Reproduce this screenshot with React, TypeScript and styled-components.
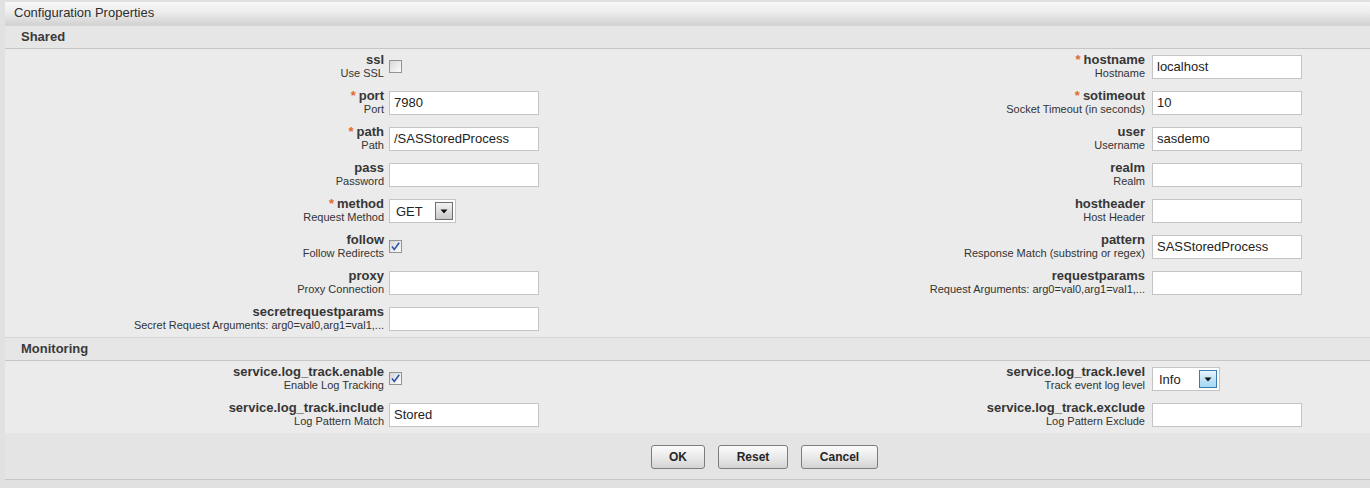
import React from "react";
import styled, { createGlobalStyle } from "styled-components";

const Global = createGlobalStyle`
  html, body { margin: 0; padding: 0; }
  body {
    background: #e1e1e1;
    font-family: "Liberation Sans", Arial, sans-serif;
    color: #333;
    width: 1370px;
    overflow: hidden;
  }
`;

const Panel = styled.div`
  margin: 2px 0 0 5px;
  width: 1365px;
  background: #ebebeb;
  border-bottom: 1px solid #c6c6c6;
`;

const Header = styled.div`
  height: 23px;
  line-height: 22px;
  padding-left: 9px;
  font-size: 13px;
  color: #2e2e2e;
  background: linear-gradient(to bottom, #f8f8f8 0%, #ececec 45%, #d2d2d2 100%);
`;

const SectionBar = styled.div`
  height: 22px;
  line-height: 22px;
  padding-left: 16px;
  font-size: 13px;
  font-weight: bold;
  color: #3a3a3a;
  background: #e6e6e6;
  border-top: 1px solid #d6d6d6;
  border-bottom: 1px solid #c6c6c6;
`;

const Grid = styled.div`
  display: grid;
  grid-template-columns: 384px 300px 463px 1fr;
  grid-auto-rows: 36px;
`;

const LabelCell = styled.div<{ $pad: number }>`
  display: flex;
  flex-direction: column;
  align-items: flex-end;
  padding: 4px ${(p) => p.$pad}px 0 0;
  white-space: nowrap;
`;

const Name = styled.div`
  font-size: 13px;
  font-weight: bold;
  line-height: 14px;
  color: #363636;
`;

const Star = styled.span`
  color: #e2692e;
  font-weight: bold;
  margin-right: 3px;
`;

const Sub = styled.div`
  font-size: 11px;
  line-height: 13px;
  color: #333;
`;

const FieldCell = styled.div`
  padding-top: 6px;
`;

const TextInput = styled.input`
  display: block;
  box-sizing: border-box;
  width: 150px;
  height: 24px;
  margin: 0;
  padding: 0 4px 1px 4px;
  border: 1px solid #c4c4c4;
  background: #fff;
  font-family: "Liberation Sans", Arial, sans-serif;
  font-size: 13px;
  color: #222;
  outline: none;
`;

const Check = styled.div`
  box-sizing: border-box;
  width: 13px;
  height: 13px;
  margin-top: 5px;
  border: 1px solid #939393;
  background: linear-gradient(135deg, #d6d6d6 0%, #eeeeee 60%, #fbfbfb 100%);
  display: flex;
  align-items: center;
  justify-content: center;
`;

const SelectBox = styled.div<{ $w: number }>`
  box-sizing: border-box;
  width: ${(p) => p.$w}px;
  height: 24px;
  border: 1px solid #c4c4c4;
  background: #fff;
  display: flex;
  align-items: center;
  justify-content: space-between;
  padding: 0 2px 0 6px;
  font-size: 13px;
  color: #222;
`;

const ArrowBtn = styled.div<{ $focus?: boolean }>`
  box-sizing: border-box;
  width: 18px;
  height: 18px;
  border: 1px solid ${(p) => (p.$focus ? "#3d7bad" : "#6f6f6f")};
  background: ${(p) =>
    p.$focus
      ? "linear-gradient(to bottom, #eaf6fd 0%, #bfe3f8 50%, #a7d9f5 100%)"
      : "linear-gradient(to bottom, #f2f2f2 0%, #dedede 50%, #c9c9c9 100%)"};
  display: flex;
  align-items: center;
  justify-content: center;
`;

const ButtonBar = styled.div`
  background: #e4e4e4;
  padding: 12px 0 10px 646px;
  display: flex;
  gap: 13px;
`;

const Btn = styled.button<{ $w: number }>`
  box-sizing: border-box;
  width: ${(p) => p.$w}px;
  height: 24px;
  margin: 0;
  padding: 0;
  border: 1px solid #7c7c7c;
  border-radius: 3px;
  background: linear-gradient(to bottom, #fbfbfb 0%, #ececec 45%, #d4d4d4 100%);
  font-family: "Liberation Sans", Arial, sans-serif;
  font-size: 12px;
  font-weight: bold;
  color: #262626;
`;

type Field =
  | { kind: "text"; value?: string }
  | { kind: "check"; checked: boolean }
  | { kind: "select"; value: string; width: number; focus?: boolean };

type Prop = { name: string; sub: string; req?: boolean; field: Field };

const Arrow = () => (
  <svg width="8" height="5" viewBox="0 0 8 5">
    <path d="M0.5 0.5 L7.5 0.5 L4 4.5 Z" fill="#111" />
  </svg>
);

const Tick = () => (
  <svg width="11" height="11" viewBox="0 0 11 11">
    <path d="M2 5.5 L4.3 8.5 L9.2 1.8" stroke="#2f55a8" strokeWidth="1.6" fill="none" />
  </svg>
);

const FieldView = ({ f }: { f: Field }) => {
  if (f.kind === "text") return <TextInput defaultValue={f.value ?? ""} />;
  if (f.kind === "check") return <Check>{f.checked && <Tick />}</Check>;
  return (
    <SelectBox $w={f.width}>
      <span>{f.value}</span>
      <ArrowBtn $focus={f.focus}>
        <Arrow />
      </ArrowBtn>
    </SelectBox>
  );
};

const Cells = ({ p, pad }: { p?: Prop; pad: number }) =>
  p ? (
    <>
      <LabelCell $pad={pad}>
        <Name>
          {p.req && <Star>*</Star>}
          {p.name}
        </Name>
        <Sub>{p.sub}</Sub>
      </LabelCell>
      <FieldCell>
        <FieldView f={p.field} />
      </FieldCell>
    </>
  ) : (
    <>
      <div />
      <div />
    </>
  );

const Section = ({ left, right }: { left: Prop[]; right: Prop[] }) => {
  const n = Math.max(left.length, right.length);
  return (
    <Grid>
      {Array.from({ length: n }).map((_, i) => (
        <React.Fragment key={i}>
          <Cells p={left[i]} pad={5} />
          <Cells p={right[i]} pad={7} />
        </React.Fragment>
      ))}
    </Grid>
  );
};

const sharedLeft: Prop[] = [
  { name: "ssl", sub: "Use SSL", field: { kind: "check", checked: false } },
  { name: "port", sub: "Port", req: true, field: { kind: "text", value: "7980" } },
  { name: "path", sub: "Path", req: true, field: { kind: "text", value: "/SASStoredProcess" } },
  { name: "pass", sub: "Password", field: { kind: "text" } },
  { name: "method", sub: "Request Method", req: true, field: { kind: "select", value: "GET", width: 67 } },
  { name: "follow", sub: "Follow Redirects", field: { kind: "check", checked: true } },
  { name: "proxy", sub: "Proxy Connection", field: { kind: "text" } },
  {
    name: "secretrequestparams",
    sub: "Secret Request Arguments: arg0=val0,arg1=val1,...",
    field: { kind: "text" },
  },
];

const sharedRight: Prop[] = [
  { name: "hostname", sub: "Hostname", req: true, field: { kind: "text", value: "localhost" } },
  { name: "sotimeout", sub: "Socket Timeout (in seconds)", req: true, field: { kind: "text", value: "10" } },
  { name: "user", sub: "Username", field: { kind: "text", value: "sasdemo" } },
  { name: "realm", sub: "Realm", field: { kind: "text" } },
  { name: "hostheader", sub: "Host Header", field: { kind: "text" } },
  { name: "pattern", sub: "Response Match (substring or regex)", field: { kind: "text", value: "SASStoredProcess" } },
  { name: "requestparams", sub: "Request Arguments: arg0=val0,arg1=val1,...", field: { kind: "text" } },
];

const monLeft: Prop[] = [
  { name: "service.log_track.enable", sub: "Enable Log Tracking", field: { kind: "check", checked: true } },
  { name: "service.log_track.include", sub: "Log Pattern Match", field: { kind: "text", value: "Stored" } },
];

const monRight: Prop[] = [
  {
    name: "service.log_track.level",
    sub: "Track event log level",
    field: { kind: "select", value: "Info", width: 68, focus: true },
  },
  { name: "service.log_track.exclude", sub: "Log Pattern Exclude", field: { kind: "text" } },
];

export default function App() {
  return (
    <>
      <Global />
      <Panel>
        <Header>Configuration Properties</Header>
        <SectionBar>Shared</SectionBar>
        <Section left={sharedLeft} right={sharedRight} />
        <SectionBar>Monitoring</SectionBar>
        <Section left={monLeft} right={monRight} />
        <ButtonBar>
          <Btn $w={54}>OK</Btn>
          <Btn $w={70}>Reset</Btn>
          <Btn $w={77}>Cancel</Btn>
        </ButtonBar>
      </Panel>
    </>
  );
}
